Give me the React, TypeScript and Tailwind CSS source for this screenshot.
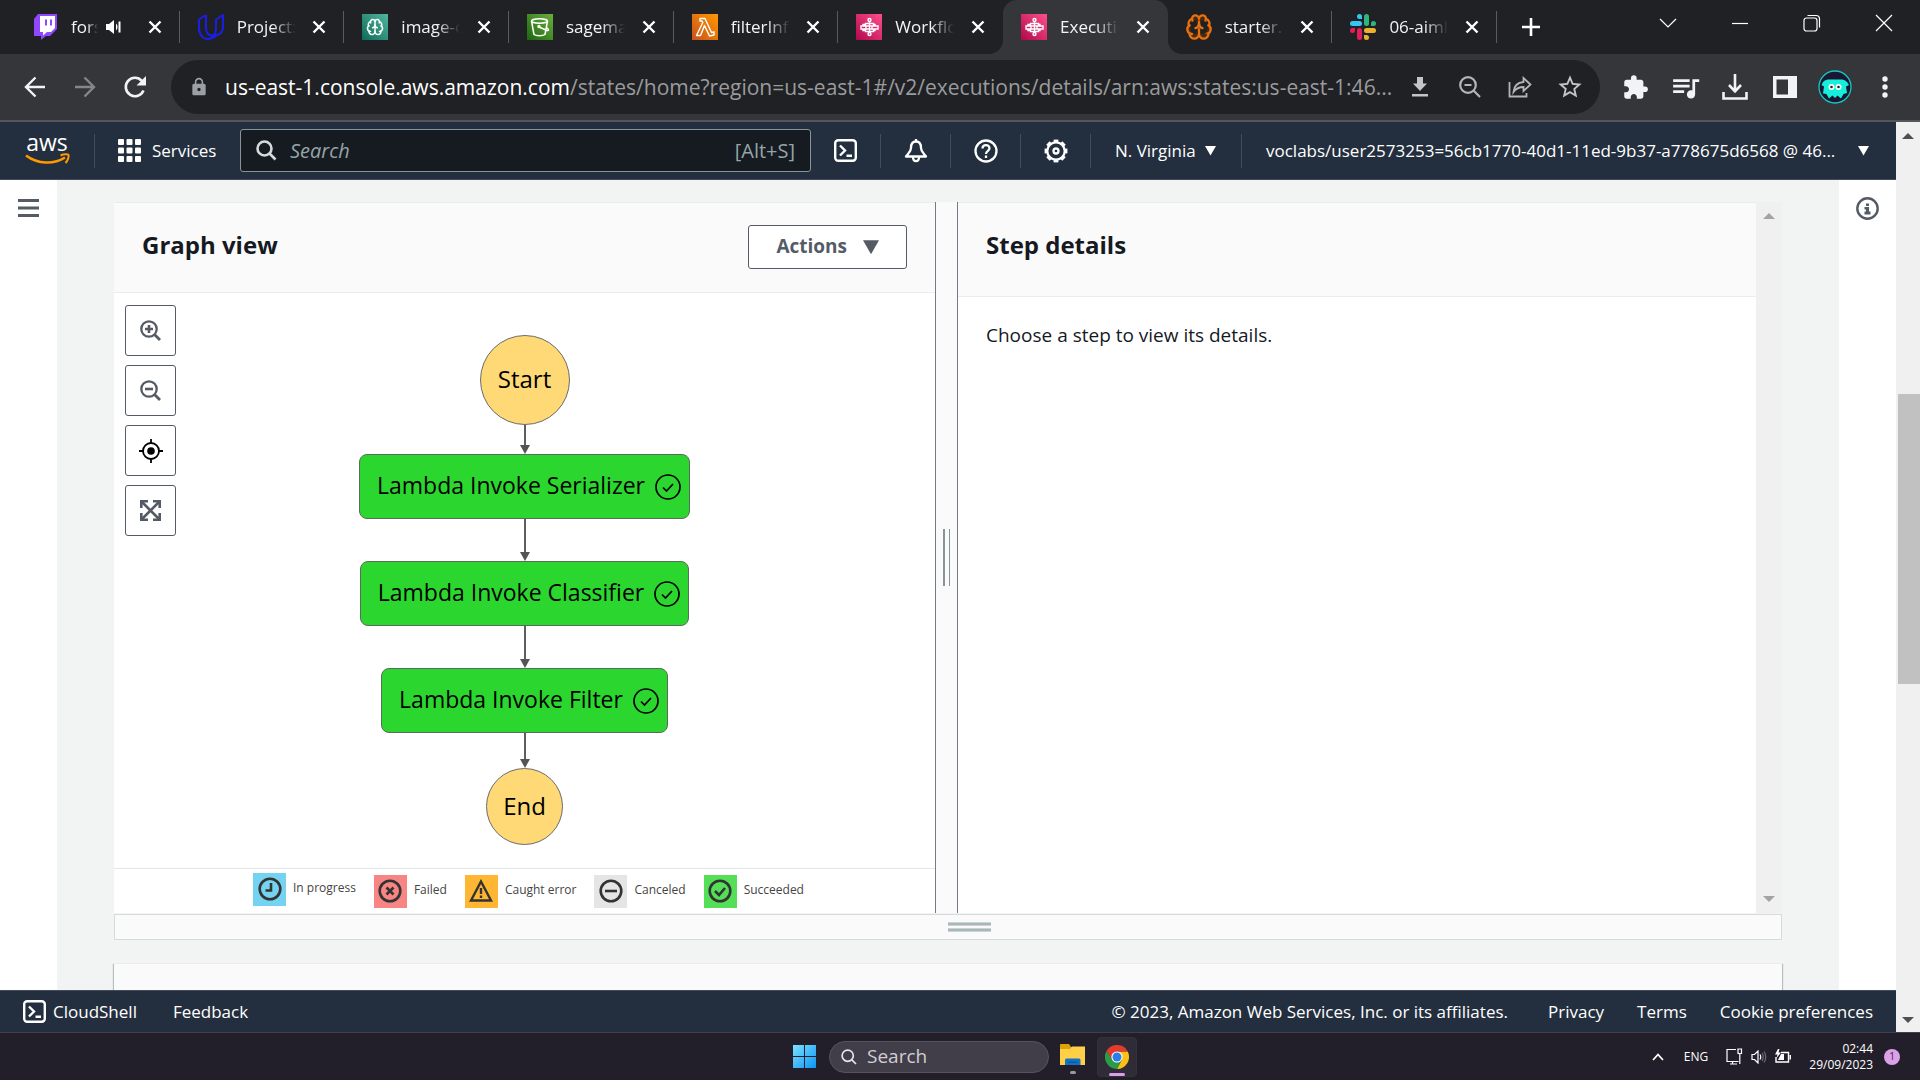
import React from "react";
import { Brain } from "lucide-react";
import { MdExtension, MdLock, MdQueueMusic, MdStarOutline } from "react-icons/md";

type Kids = { children: React.ReactNode };

/* ---------- favicons ---------- */

const TwitchIcon = () => (
  <svg width="26" height="26" viewBox="0 0 26 26">
    <path d="M5 0H24V15L17 22H13L8 26V22H1V5Z" fill="#9146ff" />
    <path d="M7 2H22V14L18 18H14L10 21.500V18H7Z" fill="#fff" />
    <path d="M12 5.500H14V11.500H12ZM17 5.500H19V11.500H17Z" fill="#9146ff" />
  </svg>
);

const UdacityIcon = () => (
  <svg width="26" height="26" viewBox="0 0 26 26" fill="none" stroke="#1d1de8" strokeWidth="2" strokeLinejoin="round">
    <path d="M8 1L1 5.500V14C1 21 5 25 10 25C14 25 16.500 23.500 18.500 21" />
    <path d="M8 1V14C8 18.500 10 21 13.500 21.500C19 22 25 20 25 13V1L18 5.500V14C18 19 15.500 24 10 25" />
  </svg>
);

const SageMakerIcon = () => (
  <span className="flex size-[26px] items-center justify-center bg-gradient-to-tr from-[#0a6b58] to-[#4fb8a0] text-white">
    <Brain size={18} strokeWidth={2} />
  </span>
);

const BucketIcon = () => (
  <svg width="26" height="26" viewBox="0 0 26 26" fill="none" stroke="#fff" strokeWidth="1.500">
    <defs>
      <linearGradient id="s3" x1="0" y1="1" x2="1" y2="0">
        <stop stopColor="#1b660f" />
        <stop offset="1" stopColor="#6cae3e" />
      </linearGradient>
    </defs>
    <rect width="26" height="26" fill="url(#s3)" stroke="none" />
    <ellipse cx="12.500" cy="7" rx="8" ry="2.200" />
    <path d="M4.500 7L7 20.500C9 22 16 22 18 20.500L20.500 7M12 13L20 16.500C22 17 22 15.500 19.500 13.500" />
    <circle cx="12" cy="12.500" r="1" fill="#fff" />
  </svg>
);

const LambdaIcon = () => (
  <svg width="26" height="26" viewBox="0 0 26 26">
    <defs>
      <linearGradient id="lam" x1="0" y1="1" x2="1" y2="0">
        <stop stopColor="#c8511b" />
        <stop offset="1" stopColor="#ff9900" />
      </linearGradient>
    </defs>
    <rect width="26" height="26" fill="url(#lam)" />
    <path
      d="M8 4.500H13L19.500 18.500L22 17.800V21L17.500 22L12.500 11.500L8.500 21.500H4.500L10.800 8.500L10 7H8Z"
      fill="none"
      stroke="#fff"
      strokeWidth="1.400"
      strokeLinejoin="round"
    />
  </svg>
);

const StepFunctionsIcon = () => (
  <svg width="26" height="26" viewBox="0 0 26 26" fill="none" stroke="#fff" strokeWidth="1.400">
    <defs>
      <linearGradient id="sfn" x1="0" y1="1" x2="1" y2="0">
        <stop stopColor="#b0084d" />
        <stop offset="1" stopColor="#ff4f8b" />
      </linearGradient>
    </defs>
    <rect width="26" height="26" fill="url(#sfn)" stroke="none" />
    <circle cx="13.500" cy="6" r="1.500" />
    <circle cx="13.500" cy="20" r="1.500" />
    <path d="M13.500 7.500V18.500M9.500 9.500H17.500V12H9.500ZM9.500 15H17.500V17.500H9.500ZM5 12H10V15H5ZM16 12H22V15H16ZM7 12V10.500H9.500M7 15V16.500H9.500M19 12V10.500H17.500M19 15V16.500H17.500" />
  </svg>
);

const JupyterBrainIcon = () => <Brain size={28} strokeWidth={2} className="-m-px fill-[#4a2a10] text-[#e8700f]" />;

const SlackIcon = () => (
  <svg width="26" height="26" viewBox="0 0 26 26">
    <g fill="#36c5f0">
      <rect x="0" y="7" width="12" height="5" rx="2.500" />
      <path d="M9.500 0A2.500 2.500 0 0 1 12 2.500V5H9.500A2.500 2.500 0 0 1 9.500 0Z" />
    </g>
    <g fill="#2eb67d">
      <rect x="14" y="0" width="5" height="12" rx="2.500" />
      <path d="M26 9.500A2.500 2.500 0 0 1 23.500 12H21V9.500A2.500 2.500 0 0 1 26 9.500Z" />
    </g>
    <g fill="#e01e5a">
      <rect x="7" y="14" width="5" height="12" rx="2.500" />
      <path d="M0 16.500A2.500 2.500 0 0 1 2.500 14H5V16.500A2.500 2.500 0 0 1 0 16.500Z" />
    </g>
    <g fill="#ecb22e">
      <rect x="14" y="14" width="12" height="5" rx="2.500" />
      <path d="M16.500 26A2.500 2.500 0 0 1 14 23.500V21H16.500A2.500 2.500 0 0 1 16.500 26Z" />
    </g>
  </svg>
);

/* ---------- browser chrome ---------- */

type TabInfo = { title: string; icon: React.ReactNode; audio?: boolean; active?: boolean; sep?: boolean };

const tabs: TabInfo[] = [
  { title: "fors", icon: <TwitchIcon />, audio: true, sep: true },
  { title: "Project:", icon: <UdacityIcon />, sep: true },
  { title: "image-c", icon: <SageMakerIcon />, sep: true },
  { title: "sagema", icon: <BucketIcon />, sep: true },
  { title: "filterInfe", icon: <LambdaIcon />, sep: true },
  { title: "Workflo", icon: <StepFunctionsIcon /> },
  { title: "Executio", icon: <StepFunctionsIcon />, active: true },
  { title: "starter.i", icon: <JupyterBrainIcon />, sep: true },
  { title: "06-aiml", icon: <SlackIcon />, sep: true },
];

const Flare = ({ side }: { side: "left" | "right" }) => (
  <svg
    width="14"
    height="14"
    viewBox="0 0 14 14"
    className={side === "left" ? "absolute bottom-0 -left-[14px]" : "absolute bottom-0 -right-[14px] -scale-x-100"}
  >
    <path d="M14 0V14H0A14 14 0 0 0 14 0Z" fill="#35363a" />
  </svg>
);

function Tab({ tab }: { tab: TabInfo }) {
  return (
    <div
      className={
        tab.active
          ? "relative flex min-w-0 flex-1 items-center rounded-t-[14px] bg-[#35363a] pr-[13px] pl-[18px]"
          : "relative flex min-w-0 flex-1 items-center pr-[13px] pl-[18px]"
      }
    >
      {tab.active && <Flare side="left" />}
      {tab.active && <Flare side="right" />}
      <span className="size-[26px] shrink-0">{tab.icon}</span>
      <span
        className={
          tab.audio
            ? "ml-3 w-[27px] overflow-hidden text-[17px] whitespace-nowrap [mask-image:linear-gradient(to_right,black_60%,transparent)]"
            : "ml-[13px] w-[59px] overflow-hidden text-[17px] whitespace-nowrap [mask-image:linear-gradient(to_right,black_60%,transparent)]"
        }
      >
        {tab.title}
      </span>
      {tab.audio && (
        <svg width="16" height="16" viewBox="0 0 16 16" className="ml-2" fill="#fff">
          <path d="M0 5H3L8 1V15L3 11H0ZM10 4.500C12 6 12 10 10 11.500ZM12.500 2.500H14.500V13.500H12.500Z" />
        </svg>
      )}
      <button aria-label={"Close " + tab.title} className="ml-auto flex size-6 items-center justify-center">
        <svg width="14" height="14" viewBox="0 0 14 14" stroke="#fff" strokeWidth="2.400">
          <path d="M1.500 1.500L12.500 12.500M12.500 1.500L1.500 12.500" />
        </svg>
      </button>
      {tab.sep && <span className="absolute top-[11px] right-0 h-8 w-px bg-[#5a5b5f]" />}
    </div>
  );
}

const WindowButton = ({ label, children }: Kids & { label: string }) => (
  <button aria-label={label} className="flex h-[46px] w-[72px] items-center justify-center">
    <svg width="18" height="18" viewBox="0 0 18 18" fill="none" stroke="#fff" strokeWidth="1.200">
      {children}
    </svg>
  </button>
);

function TabStrip() {
  return (
    <div className="flex h-[54px] shrink-0 bg-[#202124] pl-[15px] text-[#f1f3f4]">
      <div className="flex min-w-0 flex-1">
        {tabs.map((t) => (
          <Tab key={t.title} tab={t} />
        ))}
      </div>
      <div className="flex w-[423px] shrink-0">
        <button aria-label="New tab" className="flex h-full w-[68px] items-center justify-center">
          <svg width="20" height="20" viewBox="0 0 20 20" stroke="#fff" strokeWidth="2.600">
            <path d="M10 1V19M1 10H19" />
          </svg>
        </button>
        <div className="ml-auto flex">
          <WindowButton label="Search tabs">
            <path d="M1 5L9 13L17 5" />
          </WindowButton>
          <WindowButton label="Minimize">
            <path d="M1 9.500H17" />
          </WindowButton>
          <WindowButton label="Restore">
            <rect x="1" y="4" width="13" height="13" rx="2.500" />
            <path d="M4.500 1.500H13A3.500 3.500 0 0 1 16.500 5V13.500" />
          </WindowButton>
          <WindowButton label="Close">
            <path d="M1 1L17 17M17 1L1 17" />
          </WindowButton>
        </div>
      </div>
    </div>
  );
}

const ToolButton = ({ label, children }: Kids & { label: string }) => (
  <button aria-label={label} className="flex h-10 w-[50px] shrink-0 items-center justify-center">
    {children}
  </button>
);

function Toolbar() {
  return (
    <div className="flex h-[68px] shrink-0 items-center border-b-2 border-[#55565a] bg-[#35363a] px-2.5 text-[#f1f3f4]">
      <ToolButton label="Back">
        <svg width="22" height="22" viewBox="0 0 22 22" fill="none" stroke="#f1f3f4" strokeWidth="2.400">
          <path d="M21 11H2.500M11.500 1.500L2 11L11.500 20.500" />
        </svg>
      </ToolButton>
      <ToolButton label="Forward">
        <svg width="22" height="22" viewBox="0 0 22 22" fill="none" stroke="#85868a" strokeWidth="2.400">
          <path d="M1 11H19.500M10.500 1.500L20 11L10.500 20.500" />
        </svg>
      </ToolButton>
      <ToolButton label="Reload">
        <svg width="24" height="24" viewBox="0 0 24 24" fill="none" stroke="#f1f3f4" strokeWidth="2.600">
          <path d="M20.500 15.500A9.200 9.200 0 1 1 18.800 5.800" />
          <path d="M23 1V10.500H13.500Z" fill="#f1f3f4" stroke="none" />
        </svg>
      </ToolButton>
      <div className="mr-2.5 ml-[11px] flex h-[54px] min-w-0 flex-1 items-center rounded-full bg-[#202124] pr-[5px] pl-[18px]">
        <MdLock size={20} color="#9aa0a6" className="shrink-0" />
        <div className="ml-4 flex-1 overflow-hidden pt-0.5 text-[21px] whitespace-nowrap text-[#9a9b9e]">
          <span className="text-white">us-east-1.console.aws.amazon.com</span>
          /states/home?region=us-east-1#/v2/executions/details/arn:aws:states:us-east-1:46...
        </div>
        <ToolButton label="Install">
          <svg width="16" height="20" viewBox="0 0 16 20" fill="#c4c5c7">
            <path d="M5 0H11V6.500H15L8 14L1 6.500H5ZM0 17H16V19.500H0Z" />
          </svg>
        </ToolButton>
        <ToolButton label="Zoom">
          <svg width="22" height="22" viewBox="0 0 22 22" fill="none" stroke="#b4b5b8" strokeWidth="2.200">
            <circle cx="9" cy="9" r="7.800" />
            <path d="M14.500 14.500L21 21M5.500 9H12.500" />
          </svg>
        </ToolButton>
        <ToolButton label="Share">
          <svg width="24" height="22" viewBox="0 0 24 22" fill="none" stroke="#b4b5b8" strokeWidth="1.800">
            <path d="M1.500 6V20.500H18.500V17" />
            <path d="M5.500 16C6 10 10 6.500 15.500 6V2L22.500 8.500L15.500 15V11C11 11 8 12.500 5.500 16Z" />
          </svg>
        </ToolButton>
        <ToolButton label="Bookmark">
          <MdStarOutline size={28} color="#c4c5c7" />
        </ToolButton>
      </div>
      <ToolButton label="Extensions">
        <MdExtension size={27} />
      </ToolButton>
      <ToolButton label="Media">
        <MdQueueMusic size={33} />
      </ToolButton>
      <ToolButton label="Downloads">
        <svg width="26" height="26" viewBox="0 0 26 26" fill="none" stroke="#f1f3f4" strokeWidth="2.600">
          <path d="M13 0V17M7 11L13 17.300L19 11M1.500 18V24.500H24.500V18" />
        </svg>
      </ToolButton>
      <ToolButton label="Side panel">
        <svg width="24" height="24" viewBox="0 0 24 24">
          <path d="M0 1H24V23H0ZM3.500 4.500V19.500H15V4.500Z" fill="#f1f3f4" fillRule="evenodd" />
        </svg>
      </ToolButton>
      <ToolButton label="Profile">
        <svg width="34" height="34" viewBox="0 0 34 34">
          <circle cx="17" cy="17" r="16" fill="#1b1730" stroke="#12c9c4" strokeWidth="1.300" />
          <path
            d="M5 12C8 8.500 12 10 17 9.500C22 10 26 8.500 29 12L31 15L28 16.500L29 23L25.500 24L23 28.500L19.500 25.500L17 28L14.500 25.500L11 28.500L8.500 24L5 23.500L6 16.500L3.500 15Z"
            fill="#14f0dc"
          />
          <circle cx="13.500" cy="17" r="3" fill="#fff" />
          <circle cx="20.500" cy="17" r="3" fill="#fff" />
          <circle cx="13.500" cy="17" r="1.300" fill="#222" />
          <circle cx="20.500" cy="17" r="1.300" fill="#222" />
        </svg>
      </ToolButton>
      <ToolButton label="Menu">
        <svg width="6" height="22" viewBox="0 0 6 22" fill="#f1f3f4">
          <circle cx="3" cy="3" r="2.700" />
          <circle cx="3" cy="11" r="2.700" />
          <circle cx="3" cy="19" r="2.700" />
        </svg>
      </ToolButton>
    </div>
  );
}

/* ---------- AWS header ---------- */

const Divider = () => <span className="h-[34px] w-px shrink-0 bg-[#414d5c]" />;

const Caret = ({ size }: { size: number }) => (
  <svg width={size} height={size} viewBox="0 0 12 12" fill="currentColor" className="shrink-0">
    <path d="M0 1H12L6 11.500Z" />
  </svg>
);

const ShellIcon = () => (
  <svg width="23" height="23" viewBox="0 0 23 23" fill="none" stroke="currentColor" strokeWidth="2.400" className="shrink-0">
    <rect x="1.200" y="1.200" width="20.600" height="20.600" rx="3" />
    <path d="M6 6.500L11 11.500L6 16.500M12.500 16.800H18" />
  </svg>
);

const HeaderIcon = ({ label, children }: Kids & { label: string }) => (
  <button aria-label={label} className="flex h-full w-[69px] shrink-0 items-center justify-center">
    {children}
  </button>
);

const gearTeeth = [0, 45, 90, 135, 180, 225, 270, 315];

function AwsHeader() {
  return (
    <header className="flex h-[58px] shrink-0 items-center border-b border-[#414d5c] bg-[#232f3e] text-[17px] font-medium text-white">
      <a href="#" aria-label="AWS home" className="mr-6 ml-[25px] w-[45px] shrink-0">
        <svg width="45" height="30" viewBox="0 0 45 30">
          <text x="22" y="15" textAnchor="middle" fontSize="23" fontWeight="500" fontFamily="Open Sans" fill="#fff">
            aws
          </text>
          <path d="M1 19.500C13 28.500 29 28.500 40 21.500" fill="none" stroke="#f90" strokeWidth="2.600" />
          <path d="M35.500 19.500C39 18 43 18 43.500 19C44 20.500 43 24.500 40.500 27" fill="none" stroke="#f90" strokeWidth="2" />
        </svg>
      </a>
      <Divider />
      <button className="flex h-full w-[145px] shrink-0 items-center gap-[11px] pl-[23px]">
        <svg width="23" height="23" viewBox="0 0 23 23" fill="#fff">
          {[0, 8.500, 17].map((y) => [0, 8.500, 17].map((x) => <rect key={x + "-" + y} x={x} y={y} width="6" height="6" rx="1" />))}
        </svg>
        Services
      </button>
      <label className="flex h-[43px] min-w-0 flex-1 items-center rounded-[3px] border border-[#879596] bg-[#161b22] px-[15px]">
        <svg width="21" height="21" viewBox="0 0 21 21" fill="none" stroke="#d5dbdb" strokeWidth="2.600" className="shrink-0">
          <circle cx="8.500" cy="8.500" r="7" />
          <path d="M13.500 13.500L19.500 19.500" />
        </svg>
        <input
          aria-label="Search"
          placeholder="Search"
          className="ml-[13px] min-w-0 flex-1 bg-transparent text-xl font-normal outline-none placeholder:text-[#95a5a6] placeholder:italic"
        />
        <span className="text-xl font-normal text-[#95a5a6]">[Alt+S]</span>
      </label>
      <HeaderIcon label="CloudShell">
        <ShellIcon />
      </HeaderIcon>
      <Divider />
      <HeaderIcon label="Notifications">
        <svg width="24" height="24" viewBox="0 0 24 24" fill="none" stroke="#fff" strokeWidth="2.300" strokeLinejoin="round">
          <path d="M12 2.500C8 2.500 7 6 7 9C7 13 4 14.500 2 17.500H22C20 14.500 17 13 17 9C17 6 16 2.500 12 2.500ZM12 0V3" />
          <path d="M9 18C9 23.500 15 23.500 15 18" />
        </svg>
      </HeaderIcon>
      <Divider />
      <HeaderIcon label="Help">
        <svg width="24" height="24" viewBox="0 0 24 24" fill="none" stroke="#fff" strokeWidth="2.300">
          <circle cx="12" cy="12" r="10.500" />
          <path d="M8.500 9.500C8.500 5 15.500 5 15.500 9.300C15.500 12 12 11.800 12 15" />
          <path d="M12 16.500V19" />
        </svg>
      </HeaderIcon>
      <Divider />
      <HeaderIcon label="Settings">
        <svg width="24" height="24" viewBox="0 0 24 24" fill="none" stroke="#fff">
          <circle cx="12" cy="12" r="8.700" strokeWidth="2.200" />
          <circle cx="12" cy="12" r="2.500" strokeWidth="2.300" />
          {gearTeeth.map((a) => (
            <path key={a} d="M9.600 1.900H14.400" strokeWidth="2.600" transform={`rotate(${a} 12 12)`} />
          ))}
        </svg>
      </HeaderIcon>
      <Divider />
      <button className="flex h-full w-[150px] shrink-0 items-center gap-[9px] pl-6">
        N. Virginia
        <Caret size={11} />
      </button>
      <Divider />
      <button className="flex h-full w-[654px] shrink-0 items-center justify-between pr-[27px] pl-6 whitespace-nowrap">
        voclabs/user2573253=56cb1770-40d1-11ed-9b37-a778675d6568 @ 46...
        <Caret size={11} />
      </button>
    </header>
  );
}

/* ---------- graph ---------- */

const ZoomButton = ({ label, children }: Kids & { label: string }) => (
  <button
    aria-label={label}
    className="flex size-[51px] items-center justify-center rounded-[3px] border border-[#545b64] bg-white text-[#545b64]"
  >
    {children}
  </button>
);

const Magnifier = ({ plus }: { plus?: boolean }) => (
  <svg width="21" height="21" viewBox="0 0 21 21" fill="none" stroke="currentColor" strokeWidth="2.300">
    <circle cx="9" cy="9" r="7.700" />
    <path d="M14.500 14.500L20 20" strokeWidth="2.800" />
    <path d={plus ? "M5 9H13M9 5V13" : "M5 9H13"} strokeWidth="2.600" />
  </svg>
);

/* Connector between two nodes: a line that ends in an arrow head. */
const Arrow = ({ height }: { height: string }) => (
  <div className={"flex flex-col items-center " + height}>
    <span className="w-0.5 flex-1 bg-[#5e5e5e]" />
    <svg width="10" height="9" viewBox="0 0 10 9" fill="#545454">
      <path d="M0 0H10L5 9Z" />
    </svg>
  </div>
);

const TaskNode = ({ name }: { name: string }) => (
  <button className="flex h-[65px] items-center gap-2.5 rounded-lg border border-[#5a6b5a] bg-[#2bd72f] pr-2 pl-[17px] text-[23px] text-black">
    <span className="pb-0.5">{name}</span>
    <svg width="26" height="26" viewBox="0 0 26 26" fill="none" stroke="#000" strokeWidth="1.700">
      <circle cx="13" cy="13" r="12" />
      <path d="M8 13.500L11.500 17L18 10" />
    </svg>
  </button>
);

const legend = [
  {
    name: "In progress",
    box: "flex size-[33px] items-center justify-center bg-[#75d3f2]",
    raised: true,
    mark: <path d="M13 6V13.500H7.500" />,
  },
  { name: "Failed", box: "flex size-[33px] items-center justify-center bg-[#f78584]", mark: <path d="M8.500 8.500L15.500 15.500M15.500 8.500L8.500 15.500" /> },
  { name: "Caught error", box: "flex size-[33px] items-center justify-center bg-[#ffb632]", triangle: true },
  { name: "Canceled", box: "flex size-[33px] items-center justify-center bg-[#e5e5e5]", mark: <path d="M6 12H18" /> },
  { name: "Succeeded", box: "flex size-[33px] items-center justify-center bg-[#55df57]", mark: <path d="M7 12L11 16L17 9" /> },
];

function GraphPanel() {
  return (
    <section className="flex min-w-0 flex-[821] flex-col bg-white">
      <div className="flex items-start justify-between border-y border-[#eaeded] bg-[#fafafa] px-7 pt-[22px] pb-[23px]">
        <h2 className="pt-0.5 text-2xl leading-9 font-bold">Graph view</h2>
        <button className="flex h-11 items-center gap-4 rounded-[3px] border border-[#545b64] bg-white px-[27px] text-[19px] font-bold text-[#545b64]">
          <span className="pb-0.5">Actions</span>
          <Caret size={16} />
        </button>
      </div>
      <div className="relative flex flex-col items-center pt-[42px] pb-[23px]">
        <div className="absolute top-3 left-[11px] flex flex-col gap-[9px]">
          <ZoomButton label="Zoom in">
            <Magnifier plus />
          </ZoomButton>
          <ZoomButton label="Zoom out">
            <Magnifier />
          </ZoomButton>
          <ZoomButton label="Center graph">
            <svg width="24" height="24" viewBox="0 0 24 24" fill="none" stroke="#000" strokeWidth="1.800">
              <circle cx="12" cy="12" r="8" />
              <circle cx="12" cy="12" r="3.800" fill="#000" stroke="none" />
              <path d="M12 0V4.500M12 19.500V24M0 12H4.500M19.500 12H24" />
            </svg>
          </ZoomButton>
          <ZoomButton label="Fit to screen">
            <svg width="21" height="21" viewBox="0 0 21 21" fill="none" stroke="currentColor" strokeWidth="2.600">
              <path d="M1.300 8V1.300H8M13 1.300H19.700V8M19.700 13V19.700H13M8 19.700H1.300V13" />
              <path d="M2 2L19 19M19 2L2 19" />
            </svg>
          </ZoomButton>
        </div>
        <button className="size-[90px] rounded-full border border-[#6b6b6b] bg-[#ffd975] pb-0.5 text-2xl text-black">Start</button>
        <Arrow height="h-[29px]" />
        <TaskNode name="Lambda Invoke Serializer" />
        <Arrow height="h-[42px]" />
        <TaskNode name="Lambda Invoke Classifier" />
        <Arrow height="h-[42px]" />
        <TaskNode name="Lambda Invoke Filter" />
        <Arrow height="h-[35px]" />
        <button className="size-[77px] rounded-full border border-[#6b6b6b] bg-[#ffd975] pb-0.5 text-2xl text-black">End</button>
      </div>
      <ul className="flex h-[45px] items-center justify-center gap-[18px] border-t border-[#e4e7e7] pl-2 text-xs text-[#444]">
        {legend.map((l) => (
          <li key={l.name} className={l.raised ? "flex items-center gap-[7px] pb-1" : "flex items-center gap-[7px]"}>
            <span className={l.box}>
              <svg width="24" height="24" viewBox="0 0 24 24" fill="none" stroke="#333" strokeWidth="2.600">
                {l.triangle ? (
                  <path d="M12 2.500L22 21.500H2ZM12 9V15M12 16.500V19" strokeWidth="2.400" />
                ) : (
                  <>
                    <circle cx="12" cy="12" r="10.300" />
                    {l.mark}
                  </>
                )}
              </svg>
            </span>
            <span className="pb-0.5">{l.name}</span>
          </li>
        ))}
      </ul>
    </section>
  );
}

const ArrowUp = () => (
  <svg width="12" height="6" viewBox="0 0 12 6" fill="currentColor">
    <path d="M0 6L6 0L12 6Z" />
  </svg>
);

const ArrowDown = () => (
  <svg width="12" height="6" viewBox="0 0 12 6" fill="currentColor">
    <path d="M0 0L6 6L12 0Z" />
  </svg>
);

function StepPanel() {
  return (
    <section className="flex min-w-0 flex-[824]">
      <div className="flex-1 bg-white">
        <div className="h-[95px] border-y border-[#eaeded] bg-[#fafafa] px-7 pt-[22px]">
          <h2 className="pt-0.5 text-2xl leading-9 font-bold">Step details</h2>
        </div>
        <p className="px-7 pt-6 text-[19px] leading-7">Choose a step to view its details.</p>
      </div>
      <div className="flex w-[26px] shrink-0 flex-col items-center justify-between bg-[#f0f0f0] py-[11px] text-[#a3a3a3]">
        <ArrowUp />
        <ArrowDown />
      </div>
    </section>
  );
}

function Workspace() {
  return (
    <div className="flex min-h-0 flex-1">
      <nav className="w-[57px] shrink-0 bg-white pt-[19px] pl-[18px]">
        <button aria-label="Open navigation">
          <svg width="21" height="18" viewBox="0 0 21 18" fill="#545b64">
            <path d="M0 0H21V3H0ZM0 7.500H21V10.500H0ZM0 15H21V18H0Z" />
          </svg>
        </button>
      </nav>
      <main className="flex min-w-0 flex-1 flex-col bg-[#f2f3f3] px-[57px] pt-[22px] text-[#16191f]">
        <div className="flex">
          <GraphPanel />
          <div className="flex w-[23px] shrink-0 items-center justify-center gap-1 border-x border-[#747b85] bg-[#fafafa]">
            <span className="h-[57px] w-0.5 bg-[#879596]" />
            <span className="h-[57px] w-px bg-[#879596]" />
          </div>
          <StepPanel />
        </div>
        <div className="mt-px flex h-[26px] shrink-0 flex-col items-center justify-center gap-0.5 border border-[#d5dbdb] bg-[#fafafa] pl-[43px]">
          <span className="h-1 w-[43px] border-y border-[#cbd4d4] bg-[#aab7b8]" />
          <span className="h-1 w-[43px] border-y border-[#cbd4d4] bg-[#aab7b8]" />
        </div>
        <div className="mt-[23px] flex-1 border-t border-[#eaeded] bg-[#fafafa] shadow-[1px_1px_1px_0_#b8bfc3,-1px_1px_1px_0_#b8bfc3]" />
      </main>
      <aside className="flex w-[57px] shrink-0 justify-center bg-white pt-[17px]">
        <button aria-label="Info" className="size-[23px]">
          <svg width="23" height="23" viewBox="0 0 23 23" fill="none" stroke="#545b64" strokeWidth="2.400">
            <circle cx="11.500" cy="11.500" r="10.200" />
            <path d="M10 6.500H13V9H10ZM8.500 10H13V14.500H14.500V17.500H8.500V14.500H10V12.500H8.500Z" fill="#545b64" stroke="none" />
          </svg>
        </button>
      </aside>
    </div>
  );
}

function AwsFooter() {
  return (
    <footer className="flex h-[42px] shrink-0 items-center border-t border-[#414d5c] bg-[#232f3e] px-[23px] text-[17px] whitespace-nowrap text-white">
      <button className="flex items-center gap-[7px]">
        <ShellIcon />
        CloudShell
      </button>
      <a href="#" className="ml-9">
        Feedback
      </a>
      <span className="ml-auto">© 2023, Amazon Web Services, Inc. or its affiliates.</span>
      <a href="#" className="ml-10">
        Privacy
      </a>
      <a href="#" className="ml-[33px]">
        Terms
      </a>
      <a href="#" className="ml-[33px]">
        Cookie preferences
      </a>
    </footer>
  );
}

/* ---------- Windows taskbar ---------- */

function Taskbar() {
  return (
    <div className="flex h-12 shrink-0 items-center border-t border-[#423f48] bg-[#231f2a] text-white">
      <div className="flex min-w-0 flex-1 items-center justify-end">
        <button aria-label="Start menu" className="mr-[13px]">
          <svg width="23" height="23" viewBox="0 0 23 23">
            <defs>
              <linearGradient id="win" gradientUnits="userSpaceOnUse" x1="0" y1="0" x2="23" y2="23">
                <stop stopColor="#7fe0ff" />
                <stop offset="1" stopColor="#0a95f5" />
              </linearGradient>
            </defs>
            <path d="M0 0H11V11H0ZM12 0H23V11H12ZM0 12H11V23H0ZM12 12H23V23H12Z" fill="url(#win)" />
          </svg>
        </button>
        <label className="flex h-8 w-[220px] items-center rounded-full border border-[#56535d] bg-[#413e49] pl-[11px]">
          <svg width="16" height="16" viewBox="0 0 16 16" fill="none" stroke="#e6e6e8" strokeWidth="1.700" className="shrink-0">
            <circle cx="6.700" cy="6.700" r="5.600" />
            <path d="M10.800 10.800L15 15" />
          </svg>
          <input
            aria-label="Search Windows"
            placeholder="Search"
            className="ml-2.5 w-full min-w-0 bg-transparent text-[19px] outline-none placeholder:text-[#d0cfd3]"
          />
        </label>
      </div>
      <div className="flex w-[871px] shrink-0 items-center">
        <button aria-label="File Explorer" className="mt-1 ml-[11px] flex flex-col items-center gap-1">
          <svg width="25" height="24" viewBox="0 0 25 24">
            <path d="M0 2Q0 1 1 1H9L11 4H25V10H0Z" fill="#e0a106" />
            <path d="M0 6H10L12 3.500H25V22H0Z" fill="#ffcf48" />
            <path d="M5 22V17Q5 15.500 6.500 15.500H19Q20.500 15.500 20.500 17V22Z" fill="#1273c4" />
            <path d="M8 18.500H17.500V20H8Z" fill="#0b5aa0" />
          </svg>
          <span className="h-[3px] w-1.5 rounded-full bg-[#9a98a0]" />
        </button>
        <button
          aria-label="Chrome"
          className="ml-3 flex size-10 flex-col items-center justify-end gap-1 rounded border border-[#35313c] bg-[#302c37]"
        >
          <svg width="24" height="24" viewBox="0 0 24 24">
            <path d="M12 6.500H22.700A12 12 0 0 1 12 24L16.800 14.700Z" fill="#fbc116" />
            <path d="M1.600 6L7.200 14.700L16.800 14.700L12 24A12 12 0 0 1 1.600 6Z" fill="#2a9c48" />
            <path d="M1.600 6A12 12 0 0 1 22.700 6.500H12L7.200 14.700Z" fill="#e33b2e" />
            <circle cx="12" cy="12" r="5.600" fill="#fff" />
            <circle cx="12" cy="12" r="4.500" fill="#2b7de9" />
          </svg>
          <span className="h-[3px] w-4 rounded-full bg-[#d9a0e6]" />
        </button>
        <div className="ml-auto flex items-center pr-5">
          <button aria-label="Hidden icons" className="mr-5">
            <svg width="12" height="8" viewBox="0 0 12 8" fill="none" stroke="#fff" strokeWidth="1.800">
              <path d="M1 7L6 1.500L11 7" />
            </svg>
          </button>
          <span className="mr-[18px] text-xs">ENG</span>
          <svg width="17" height="17" viewBox="0 0 17 17" fill="none" stroke="#fff" strokeWidth="1.200" className="mr-2">
            <path d="M10 1.500H1V13.500H12.500M4 16H11M6.500 13.500V16M12 1H15.500V5.500H12ZM13.800 5.500V16" />
          </svg>
          <svg width="16" height="14" viewBox="0 0 16 14" fill="none" stroke="#fff" strokeWidth="1.200" className="mr-2">
            <path d="M1 4.500H3.500L7 1V13L3.500 9.500H1ZM9 4.500Q10.500 7 9 9.500" />
            <path d="M11 3Q13.500 7 11 11M13 1.500Q16.500 7 13 12.500" stroke="#6f6c76" />
          </svg>
          <svg width="17" height="15" viewBox="0 0 17 15" className="mr-[17px]">
            <path d="M6 3.500H13.500V13H1V8" fill="none" stroke="#fff" strokeWidth="1.400" />
            <path d="M3 11L6 5H9V11ZM14.500 6H16V10.500H14.500ZM3 0L0 5.500H2.500L1.500 9L6 3.500H3.500L4.500 0Z" fill="#fff" />
          </svg>
          <span className="text-right text-xs leading-4">
            02:44
            <br />
            29/09/2023
          </span>
          <span className="ml-[11px] flex size-4 items-center justify-center rounded-full bg-[#dca0e8] text-[10px] text-[#3a2640]">1</span>
        </div>
      </div>
    </div>
  );
}

export default function App() {
  return (
    <div className="flex h-screen flex-col overflow-hidden font-['Open_Sans',sans-serif]">
      <TabStrip />
      <Toolbar />
      <div className="flex min-h-0 flex-1">
        <div className="flex min-w-0 flex-1 flex-col">
          <AwsHeader />
          <Workspace />
          <AwsFooter />
        </div>
        <div className="flex w-6 shrink-0 flex-col items-center bg-[#f0f0f0] pt-[11px] pb-[9px] text-[#505050]">
          <ArrowUp />
          <div className="flex min-h-0 w-full flex-1 flex-col pt-[255px] pl-0.5">
            <div className="h-[290px] bg-[#c1c1c1]" />
          </div>
          <ArrowDown />
        </div>
      </div>
      <Taskbar />
    </div>
  );
}
